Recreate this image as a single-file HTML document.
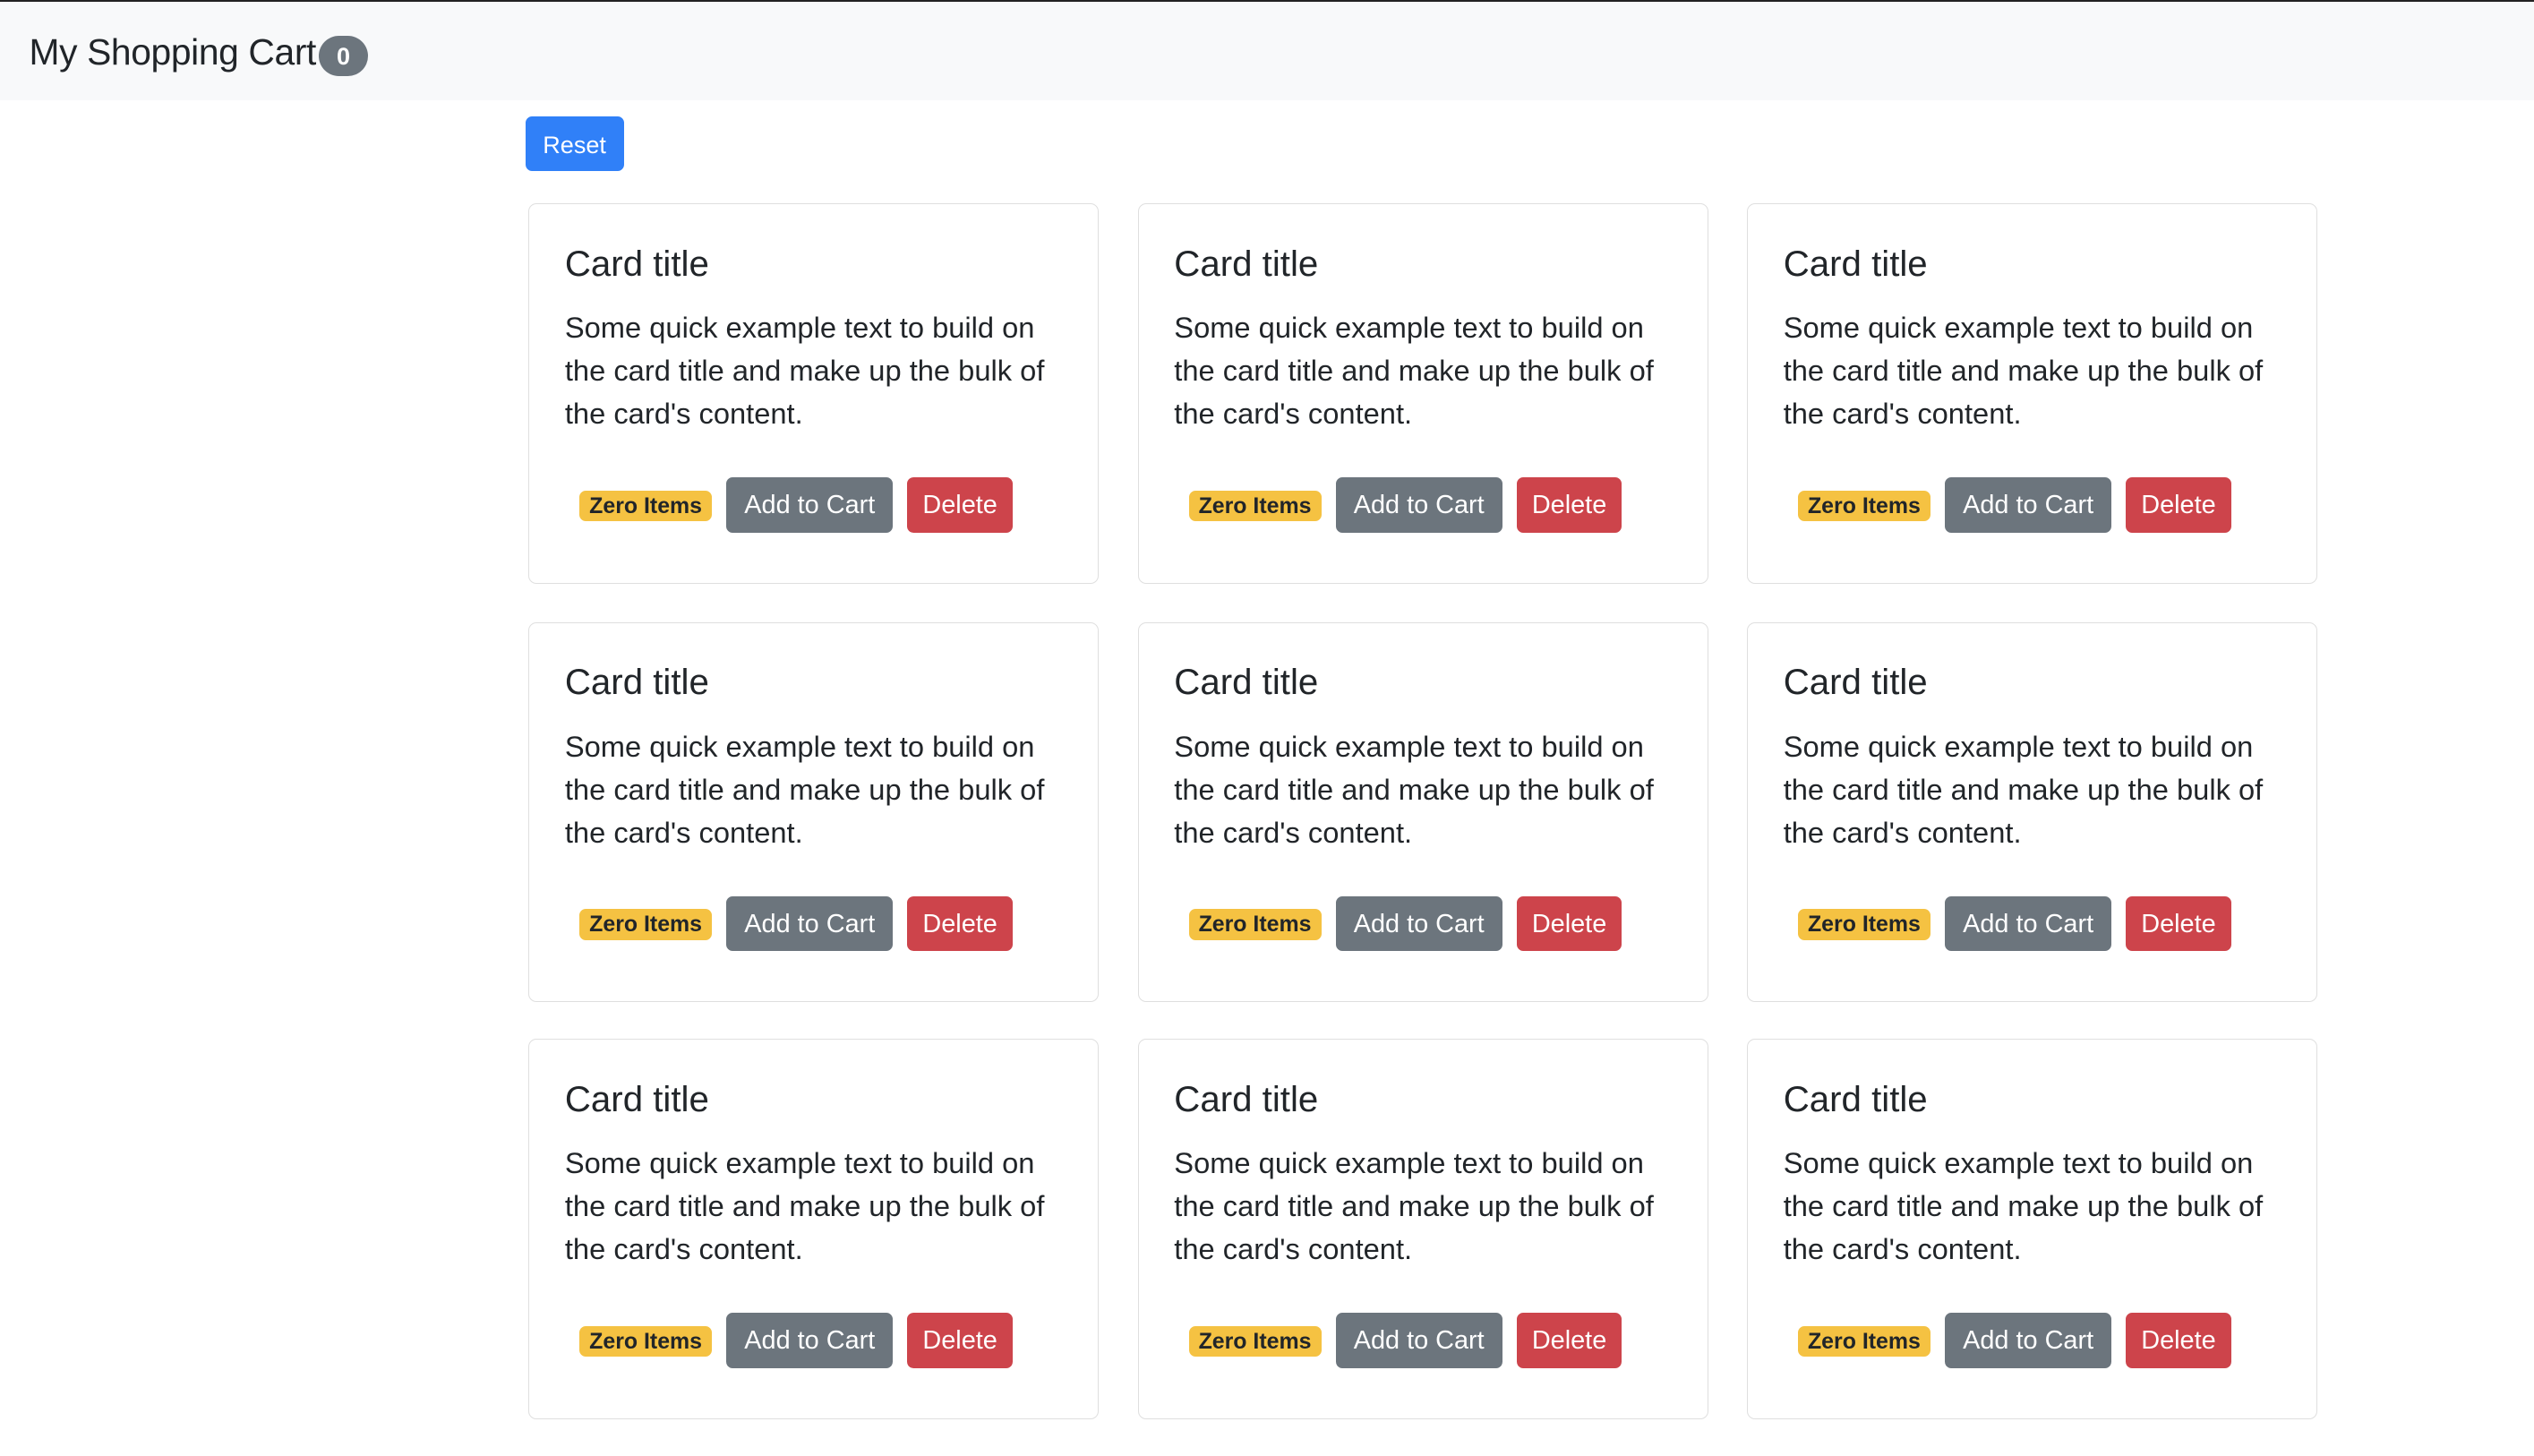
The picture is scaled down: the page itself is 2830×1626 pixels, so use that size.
<!DOCTYPE html>
<html><head><meta charset="utf-8"><style>
html,body{margin:0;padding:0;background:#fff;overflow:hidden}
html{zoom:1.8048}
body{width:1568px;height:901px;position:relative;font-family:"Liberation Sans",Arial,sans-serif;color:#212529}
.nav{position:absolute;left:0;top:0;width:1568px;height:62px;background:#f8f9fa;border-top:1.5px solid #222;box-sizing:border-box}
.brand{position:absolute;left:18px;top:17px;font-size:22.6px;color:#212529;line-height:28px;letter-spacing:-0.2px}
.pill{position:absolute;left:197px;top:21px;width:31px;height:25px;border-radius:13px;background:#6c757d;color:#fff;font-weight:bold;font-size:15px;text-align:center;line-height:25px}
.reset{position:absolute;left:325px;top:72px;width:61px;height:34px;background:#3080f8;border-radius:4px;color:#fff;font-size:15px;text-align:center;line-height:35px}
.card{position:absolute;width:352px;height:234px;border:1px solid #dfdfdf;border-radius:5px;background:#fff}
.t{position:absolute;left:22px;top:23px;font-size:22.3px;line-height:28px}
.p{position:absolute;left:22px;top:63px;font-size:18.1px;line-height:26.6px;white-space:nowrap}
.z{position:absolute;left:31px;top:177px;width:82px;height:19px;background:#f5c242;border-radius:4px;font-weight:bold;font-size:13.8px;text-align:center;line-height:19px;color:#212529}
.a{position:absolute;left:122px;top:169px;width:103px;height:34px;background:#6c757d;border-radius:4px;color:#fff;font-size:16px;text-align:center;line-height:35px}
.d{position:absolute;left:234px;top:169px;width:65px;height:34px;background:#cd444b;border-radius:4px;color:#fff;font-size:16px;text-align:center;line-height:35px}
</style></head><body>
<div class="nav"><div class="brand">My Shopping Cart</div><div class="pill">0</div></div>
<div class="reset">Reset</div>

<div class="card" style="left:327px;top:126px"><div class="t">Card title</div><div class="p">Some quick example text to build on<br>the card title and make up the bulk of<br>the card's content.</div><div class="z">Zero Items</div><div class="a">Add to Cart</div><div class="d">Delete</div></div>
<div class="card" style="left:704px;top:126px"><div class="t">Card title</div><div class="p">Some quick example text to build on<br>the card title and make up the bulk of<br>the card's content.</div><div class="z">Zero Items</div><div class="a">Add to Cart</div><div class="d">Delete</div></div>
<div class="card" style="left:1081px;top:126px"><div class="t">Card title</div><div class="p">Some quick example text to build on<br>the card title and make up the bulk of<br>the card's content.</div><div class="z">Zero Items</div><div class="a">Add to Cart</div><div class="d">Delete</div></div>

<div class="card" style="left:327px;top:385px"><div class="t">Card title</div><div class="p">Some quick example text to build on<br>the card title and make up the bulk of<br>the card's content.</div><div class="z">Zero Items</div><div class="a">Add to Cart</div><div class="d">Delete</div></div>
<div class="card" style="left:704px;top:385px"><div class="t">Card title</div><div class="p">Some quick example text to build on<br>the card title and make up the bulk of<br>the card's content.</div><div class="z">Zero Items</div><div class="a">Add to Cart</div><div class="d">Delete</div></div>
<div class="card" style="left:1081px;top:385px"><div class="t">Card title</div><div class="p">Some quick example text to build on<br>the card title and make up the bulk of<br>the card's content.</div><div class="z">Zero Items</div><div class="a">Add to Cart</div><div class="d">Delete</div></div>

<div class="card" style="left:327px;top:643px"><div class="t">Card title</div><div class="p">Some quick example text to build on<br>the card title and make up the bulk of<br>the card's content.</div><div class="z">Zero Items</div><div class="a">Add to Cart</div><div class="d">Delete</div></div>
<div class="card" style="left:704px;top:643px"><div class="t">Card title</div><div class="p">Some quick example text to build on<br>the card title and make up the bulk of<br>the card's content.</div><div class="z">Zero Items</div><div class="a">Add to Cart</div><div class="d">Delete</div></div>
<div class="card" style="left:1081px;top:643px"><div class="t">Card title</div><div class="p">Some quick example text to build on<br>the card title and make up the bulk of<br>the card's content.</div><div class="z">Zero Items</div><div class="a">Add to Cart</div><div class="d">Delete</div></div>
</body></html>
